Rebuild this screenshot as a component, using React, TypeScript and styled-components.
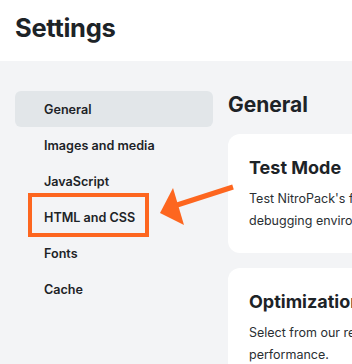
import React from 'react';
import styled, { createGlobalStyle } from 'styled-components';

const GlobalStyle = createGlobalStyle`
  html, body {
    margin: 0;
    padding: 0;
    background: #f3f4f6;
    font-family: Inter, "Noto Sans", sans-serif;
    color: #1d2327;
    overflow: hidden;
  }
`;

const Page = styled.div`
  position: relative;
  width: 352px;
  height: 364px;
  overflow: hidden;
  background: #f3f4f6;
`;

const Header = styled.header`
  height: 61px;
  background: #fff;
  padding-left: 15px;
  display: flex;
  align-items: center;
  box-sizing: border-box;
  padding-bottom: 6px;
`;

const Title = styled.h1`
  margin: 0;
  font-size: 25.5px;
  font-weight: 700;
  letter-spacing: -0.3px;
`;

const Body = styled.div`
  display: flex;
  gap: 15px;
  padding: 30px 0 0 15px;
`;

const Sidebar = styled.nav`
  width: 198px;
  flex-shrink: 0;
  display: flex;
  flex-direction: column;
`;

const NavItem = styled.div<{ $active?: boolean }>`
  height: 36px;
  display: flex;
  align-items: center;
  padding-left: 29px;
  border-radius: 6px;
  font-size: 12.6px;
  font-weight: 600;
  background: ${(p) => (p.$active ? '#e2e6e9' : 'transparent')};
`;

const Main = styled.main`
  flex-shrink: 0;
  width: 420px;
  display: flex;
  flex-direction: column;
  gap: 15px;
`;

const Heading = styled.h2`
  margin: 0;
  height: 28px;
  line-height: 28px;
  font-size: 21px;
  font-weight: 700;
`;

const Card = styled.section`
  background: #fff;
  border-radius: 12px;
  padding: 22px 21px 21px;
`;

const CardTitle = styled.h3`
  margin: 0 0 8px;
  font-size: 18px;
  font-weight: 700;
  line-height: 24px;
  white-space: nowrap;
`;

const CardText = styled.p`
  margin: 0;
  font-size: 12.5px;
  line-height: 22px;
  white-space: nowrap;
  color: #2a2f33;
`;

const Highlight = styled.div`
  position: absolute;
  left: 28px;
  top: 193px;
  width: 121px;
  height: 44px;
  box-sizing: border-box;
  border: 4px solid #fd661f;
`;

const Arrow = styled.svg`
  position: absolute;
  left: 150px;
  top: 170px;
`;

export default function App() {
  const items = ['General', 'Images and media', 'JavaScript', 'HTML and CSS', 'Fonts', 'Cache'];
  return (
    <Page>
      <GlobalStyle />
      <Header>
        <Title>Settings</Title>
      </Header>
      <Body>
        <Sidebar>
          {items.map((item, i) => (
            <NavItem key={item} $active={i === 0}>
              {item}
            </NavItem>
          ))}
        </Sidebar>
        <Main>
          <Heading>General</Heading>
          <Card>
            <CardTitle>Test Mode</CardTitle>
            <CardText>
              Test NitroPack's features without affecting your visitors in a safe
              <br />
              debugging environment.
            </CardText>
          </Card>
          <Card>
            <CardTitle>Optimization Mode</CardTitle>
            <CardText>
              Select from our ready-made optimization modes to boost your site's
              <br />
              performance.
            </CardText>
          </Card>
        </Main>
      </Body>
      <Highlight />
      <Arrow width="90" height="60" viewBox="0 0 90 60">
        <line x1="83" y1="17" x2="24" y2="36" stroke="#fd661f" strokeWidth="5" />
        <polygon points="10,43 23,18 34,55" fill="#fd661f" />
      </Arrow>
    </Page>
  );
}
